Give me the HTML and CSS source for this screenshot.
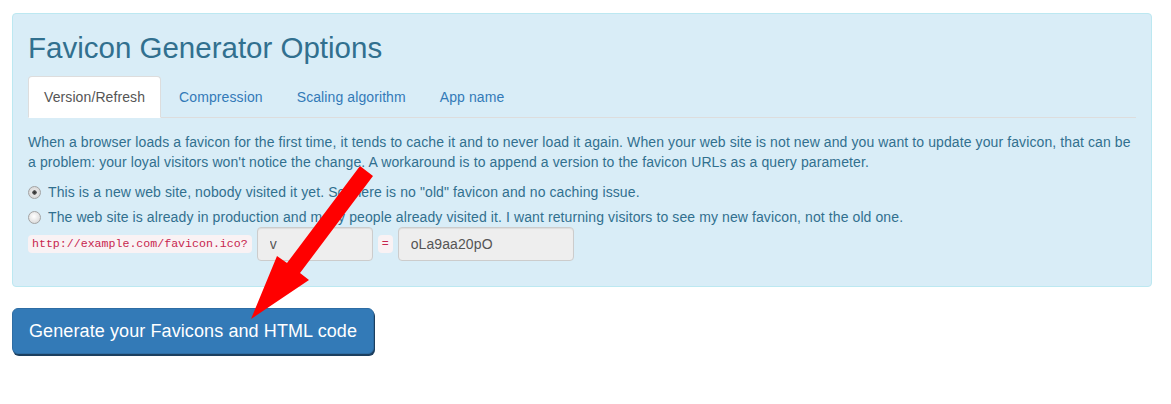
FILE: index.html
```html
<!DOCTYPE html>
<html lang="en">

<head>
    <meta charset="UTF-8">
    <meta name="viewport" content="width=device-width, initial-scale=1.0">
    <title>Favicon Generator Options</title>
    <link rel="stylesheet" href="styles.css">
</head>

<body>

    <div class="page">

        <!-- Options panel -->
        <div class="panel">
            <h2 class="panel-title">Favicon Generator Options</h2>

            <ul class="tabs">
                <li class="active"><a href="#">Version/Refresh</a></li>
                <li><a href="#">Compression</a></li>
                <li><a href="#">Scaling algorithm</a></li>
                <li><a href="#">App name</a></li>
            </ul>

            <div class="tab-body">
                <p>When a browser loads a favicon for the first time, it tends to cache it and to never load it again. When your web site is not new and you want to update your favicon, that can be a problem: your loyal visitors won't notice the change. A workaround is to append a version to the favicon URLs as a query parameter.</p>

                <label class="radio">
                    <input type="radio" name="version" checked>
                    <span>This is a new web site, nobody visited it yet. So there is no "old" favicon and no caching issue.</span>
                </label>
                <label class="radio">
                    <input type="radio" name="version">
                    <span>The web site is already in production and many people already visited it. I want returning visitors to see my new favicon, not the old one.</span>
                </label>

                <div class="query-row">
                    <code>http://example.com/favicon.ico?</code>
                    <input type="text" class="field field-name" value="v" disabled>
                    <code>=</code>
                    <input type="text" class="field field-value" value="oLa9aa20pO" disabled>
                </div>
            </div>
        </div>

        <!-- Submit -->
        <button class="btn-generate">Generate your Favicons and HTML code</button>

        <!-- Red annotation arrow drawn over the page -->
        <svg class="arrow" width="1171" height="404" viewBox="0 0 1171 404">
            <polygon fill="#ff0000" points="360,166 373,176 300,273 309,280 251,319 277,256 287,263"/>
        </svg>

    </div>

</body>

</html>
```

FILE: styles.css
```css
body {
    margin: 0;
    background: #ffffff;
    font-family: "Liberation Sans", Arial, sans-serif;
    font-size: 14px;
    line-height: 20px;
    letter-spacing: 0.1px;
    color: #333;
}

.page {
    position: relative;
    width: 1171px;
    height: 404px;
    padding: 13px 0 0 12px;
    box-sizing: border-box;
}

.panel {
    width: 1140px;
    box-sizing: border-box;
    background: #d9edf7;
    border: 1px solid #bce8f1;
    border-radius: 4px;
    padding: 15px 15px 15px 15px;
    color: #31708f;
}

.panel-title {
    margin: 2px 0 12px 0;
    font-size: 29.5px;
    font-weight: normal;
    line-height: 33px;
    letter-spacing: 0;
    color: #31708f;
}

.tabs {
    display: flex;
    margin: 0;
    padding: 0;
    list-style: none;
    border-bottom: 1px solid #ddd;
}

.tabs li {
    margin-right: 2px;
    margin-bottom: -1px;
}

.tabs li a {
    display: block;
    padding: 10px 15px;
    border: 1px solid transparent;
    border-radius: 4px 4px 0 0;
    color: #337ab7;
    text-decoration: none;
}

.tabs li.active a {
    background: #ffffff;
    border-color: #ddd #ddd transparent #ddd;
    color: #555;
}

.tab-body {
    padding-top: 14px;
}

.tab-body p {
    margin: 0 0 10px 0;
}

.radio {
    display: flex;
    align-items: center;
    margin-bottom: 5px;
}

.radio input {
    appearance: none;
    -webkit-appearance: none;
    width: 13px;
    height: 13px;
    margin: 0 7px 0 0;
    border: 1px solid #a3a3a3;
    border-radius: 50%;
    background: radial-gradient(circle at 45% 40%, #ffffff 0%, #e6e6e6 55%, #cfcfcf 100%);
    box-sizing: border-box;
}

.radio input:checked {
    background: radial-gradient(circle at 50% 50%, #2f2f2f 0%, #555 25%, #e6e6e6 32%, #d0d0d0 100%);
}

.query-row {
    display: flex;
    align-items: center;
    gap: 5px;
    margin-top: -5px;
    margin-bottom: 10px;
}

.query-row code {
    padding: 2px 4px;
    border-radius: 4px;
    background: #f9f2f4;
    color: #c7254e;
    font-family: "Liberation Mono", "Courier New", monospace;
    font-size: 11.6px;
    line-height: 14px;
    letter-spacing: 0;
}

.field {
    height: 34px;
    box-sizing: border-box;
    padding: 6px 12px;
    border: 1px solid #ccc;
    border-radius: 4px;
    background: #eeeeee;
    box-shadow: inset 0 1px 1px rgba(0, 0, 0, 0.075);
    color: #555;
    font-family: "Liberation Sans", Arial, sans-serif;
    font-size: 14px;
    letter-spacing: 0.1px;
    opacity: 1;
}

.field-name {
    width: 116px;
}

.field-value {
    width: 176px;
}

.btn-generate {
    display: block;
    margin-top: 21px;
    padding: 10px 16px;
    border: 1px solid #2e6da4;
    border-radius: 6px;
    background: #337ab7;
    box-shadow: 1px 2px 0 #1c3f5f;
    color: #ffffff;
    font-family: "Liberation Sans", Arial, sans-serif;
    font-size: 18px;
    line-height: 24px;
    letter-spacing: 0.1px;
}

.arrow {
    position: absolute;
    top: 0;
    left: 0;
    pointer-events: none;
}
```
